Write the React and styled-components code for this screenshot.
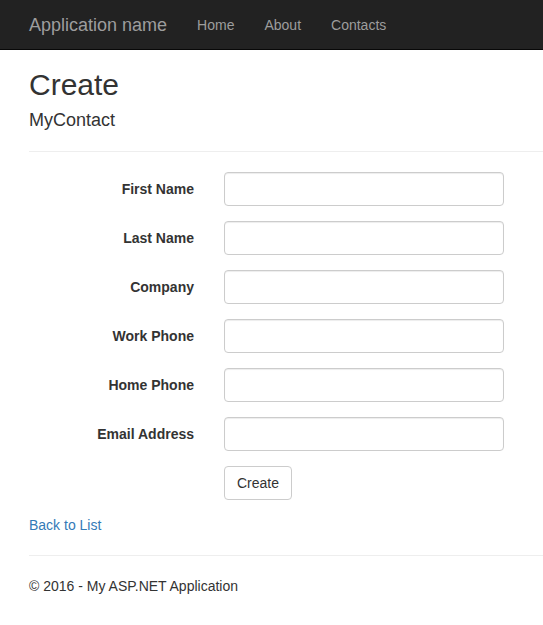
import React from "react";
import styled, { createGlobalStyle } from "styled-components";

const Global = createGlobalStyle`
  html, body { margin: 0; padding: 0; }
  body {
    font-family: "Liberation Sans", Arial, Helvetica, sans-serif;
    font-size: 14px;
    line-height: 1.42857143;
    color: #333;
    background: #fff;
    overflow: hidden;
  }
  * { box-sizing: border-box; }
`;

const Navbar = styled.nav`
  height: 50px;
  background: #222;
  border-bottom: 1px solid #080808;
  display: flex;
  align-items: center;
  padding-left: 14px;
`;

const Brand = styled.a`
  font-size: 18px;
  line-height: 20px;
  padding: 15px;
  color: #9d9d9d;
  text-decoration: none;
`;

const NavLink = styled.a`
  font-size: 14px;
  line-height: 20px;
  padding: 15px;
  color: #9d9d9d;
  text-decoration: none;
`;

const Content = styled.main`
  padding-left: 29px;
  display: flow-root;
`;

const H2 = styled.h2`
  font-size: 30px;
  font-weight: 500;
  line-height: 1.1;
  margin: 18px 0 10px;
`;

const H4 = styled.h4`
  font-size: 18px;
  font-weight: 500;
  line-height: 1.1;
  margin: 10px 0 10px;
`;

const Rule = styled.hr`
  margin: 20px 0;
  border: 0;
  border-top: 1px solid #eee;
  height: 0;
`;

const Form = styled.form`
  display: flex;
  flex-direction: column;
  gap: 15px;
  margin-bottom: 15px;
`;

const Group = styled.div`
  display: grid;
  grid-template-columns: 165px 280px;
  column-gap: 30px;
  align-items: start;
`;

const Label = styled.label`
  font-weight: bold;
  text-align: right;
  padding-top: 7px;
  line-height: 20px;
`;

const Input = styled.input`
  display: block;
  width: 280px;
  height: 34px;
  padding: 6px 12px;
  font-size: 14px;
  border: 1px solid #ccc;
  border-radius: 4px;
  box-shadow: inset 0 1px 1px rgba(0,0,0,.075);
  font-family: inherit;
`;

const Button = styled.button`
  justify-self: start;
  height: 34px;
  padding: 6px 12px;
  font-size: 14px;
  line-height: 20px;
  font-family: inherit;
  color: #333;
  background: #fff;
  border: 1px solid #ccc;
  border-radius: 4px;
`;

const Link = styled.a`
  color: #337ab7;
  text-decoration: none;
`;

const Footer = styled.footer`
  p { margin: 0 0 10px; }
`;

export default function App() {
  const fields = ["First Name", "Last Name", "Company", "Work Phone", "Home Phone", "Email Address"];
  return (
    <>
      <Global />
      <Navbar>
        <Brand href="#">Application name</Brand>
        <NavLink href="#">Home</NavLink>
        <NavLink href="#">About</NavLink>
        <NavLink href="#">Contacts</NavLink>
      </Navbar>
      <Content>
        <H2>Create</H2>
        <H4>MyContact</H4>
        <Rule />
        <Form onSubmit={(e) => e.preventDefault()}>
          {fields.map((f) => (
            <Group key={f}>
              <Label>{f}</Label>
              <Input type="text" />
            </Group>
          ))}
          <Group>
            <span />
            <Button type="submit">Create</Button>
          </Group>
        </Form>
        <div>
          <Link href="#">Back to List</Link>
        </div>
        <Rule />
        <Footer>
          <p>© 2016 - My ASP.NET Application</p>
        </Footer>
      </Content>
    </>
  );
}
